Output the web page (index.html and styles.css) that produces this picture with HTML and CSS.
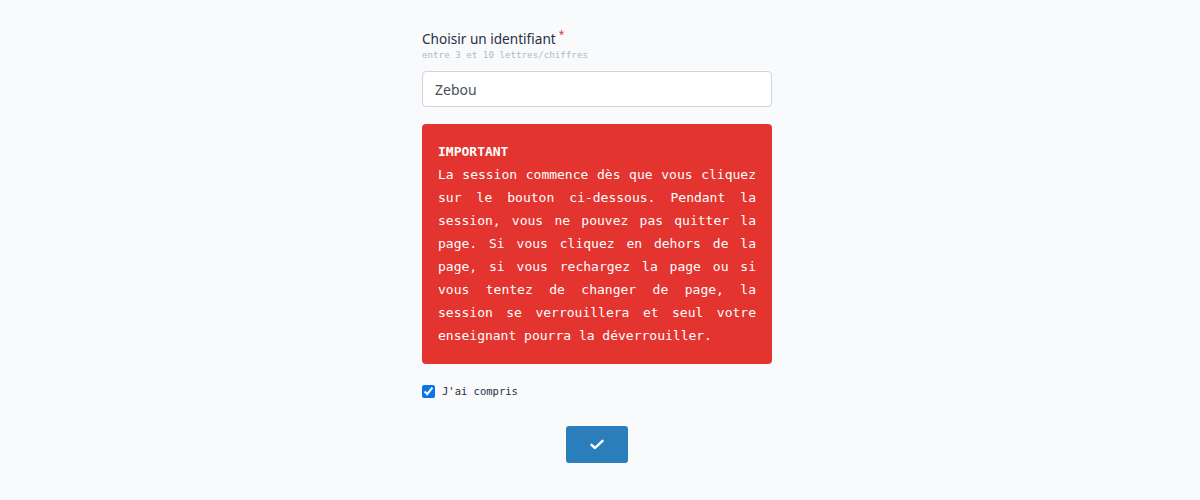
FILE: index.html
```html
<!DOCTYPE html>
<html lang="fr">
<head>
<meta charset="utf-8">
<title>Session</title>
<link rel="stylesheet" href="styles.css">
</head>
<body>
<main class="form">
  <label class="label" for="ident">Choisir un identifiant<sup class="req">*</sup></label>
  <div class="hint">entre 3 et 10 lettres/chiffres</div>
  <input class="input" id="ident" type="text" value="Zebou">
  <div class="alert">
    <div class="alert-title">IMPORTANT</div>
    <p class="alert-text">La session commence dès que vous cliquez sur le bouton ci-dessous. Pendant la session, vous ne pouvez pas quitter la page. Si vous cliquez en dehors de la page, si vous rechargez la page ou si vous tentez de changer de page, la session se verrouillera et seul votre enseignant pourra la déverrouiller.</p>
  </div>
  <label class="check">
    <input type="checkbox" class="check-box" checked>
    <span>J'ai compris</span>
  </label>
  <div class="actions">
    <button class="btn" type="button" aria-label="Valider">
      <svg width="14" height="11" viewBox="0 0 14 11"><path d="M1.5 5.8 L5 9 L12.5 1.8" fill="none" stroke="#fff" stroke-width="2.4" stroke-linecap="round" stroke-linejoin="round"/></svg>
    </button>
  </div>
</main>
</body>
</html>
```

FILE: styles.css
```css
html, body {
  margin: 0;
  padding: 0;
  background: #f8fafc;
}
body {
  font-family: "Noto Sans", "Open Sans", sans-serif;
  padding-right: 6px;
}
.form {
  width: 350px;
  margin: 0 auto;
  padding-top: 29px;
  display: flex;
  flex-direction: column;
}
.label {
  font-family: "Noto Sans", sans-serif;
  font-size: 13.6px;
  line-height: 20px;
  color: #2b2f45;
}
.req {
  color: #e3342f;
  font-size: 10px;
  margin-left: 3px;
  vertical-align: 6px;
  line-height: 0;
}
.hint {
  font-family: "DejaVu Sans Mono", monospace;
  font-size: 9.2px;
  line-height: 12px;
  color: #b4b8bd;
  margin-top: 0;
}
.input {
  margin-top: 10px;
  box-sizing: border-box;
  height: 36px;
  width: 350px;
  border: 1px solid #ced4da;
  border-radius: 4px;
  background: #fff;
  padding: 0 12px;
  font-family: "Noto Sans", sans-serif;
  font-size: 14px;
  color: #495057;
  outline: none;
}
.alert {
  margin-top: 17px;
  background: #e3342f;
  border-radius: 4px;
  padding: 16px 16px 17px;
  color: #fff;
  font-family: "DejaVu Sans Mono", monospace;
  font-size: 13px;
  line-height: 23px;
}
.alert-title {
  font-weight: bold;
}
.alert-text {
  margin: 0;
  text-align: justify;
}
.check {
  margin-top: 19px;
  display: flex;
  align-items: center;
  gap: 7px;
  font-family: "DejaVu Sans Mono", monospace;
  font-size: 10.5px;
  line-height: 16px;
  color: #2b2f45;
}
.check-box {
  margin: 0;
  width: 13px;
  height: 13px;
  accent-color: #0b75e6;
}
.actions {
  margin-top: 27px;
  display: flex;
  justify-content: center;
}
.btn {
  width: 62px;
  height: 37px;
  border: none;
  border-radius: 3px;
  background: #2a7fbb;
  display: flex;
  align-items: center;
  justify-content: center;
  padding: 0;
}
```
